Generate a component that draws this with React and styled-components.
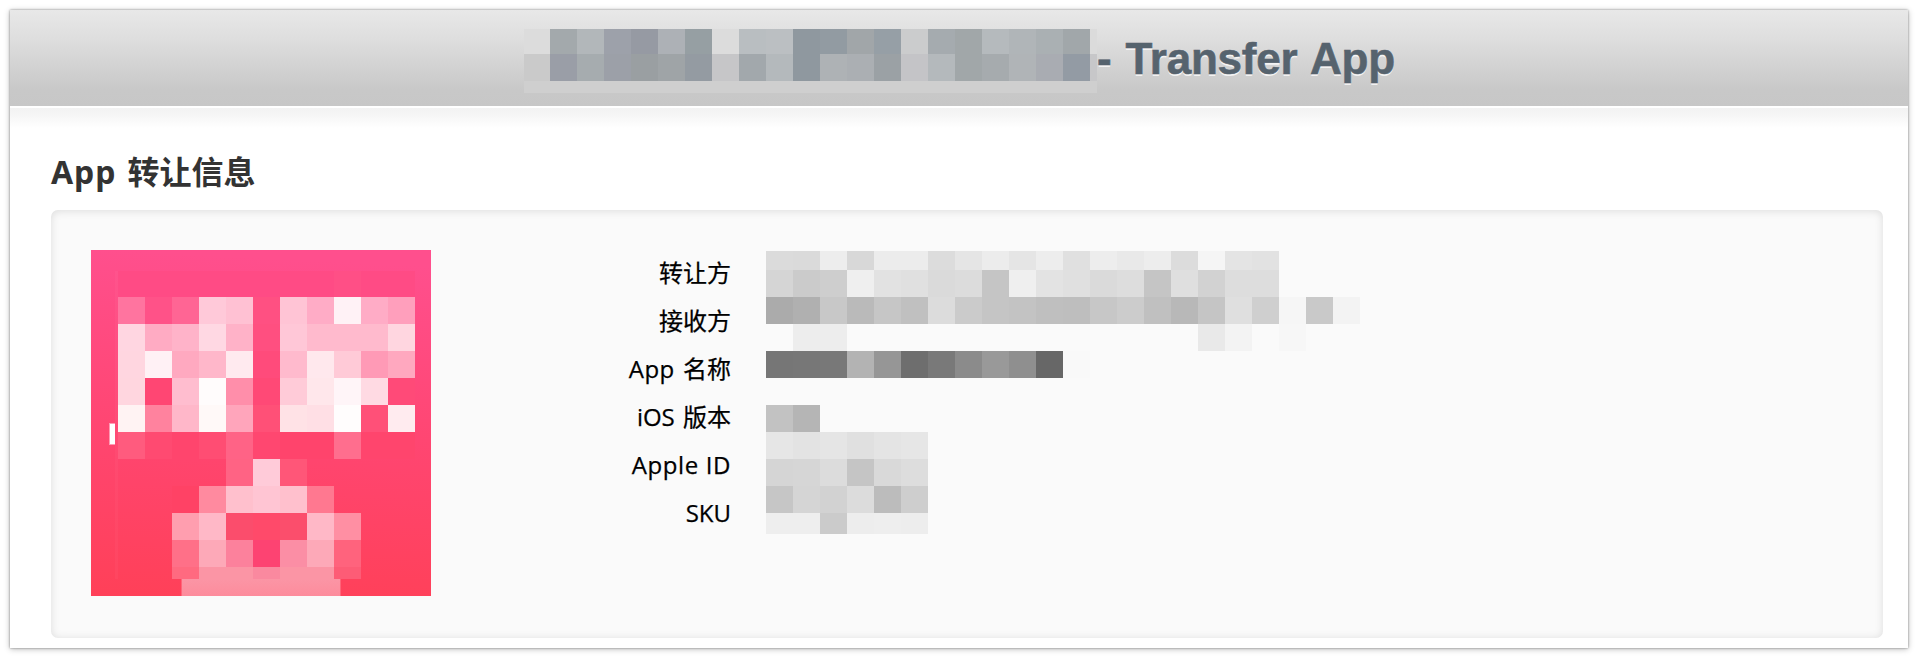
import React from 'react';
import styled, { createGlobalStyle } from 'styled-components';

const GlobalStyle = createGlobalStyle`
  * { box-sizing: border-box; }
  body { margin: 0; background: #fff; }
`;

const Page = styled.div`
  height: 658px;
  padding: 10px;
`;

const Window = styled.main`
  height: 638px;
  background: #fff;
  box-shadow: 0 0 2px rgba(0, 0, 0, 0.4), 0 1px 6px rgba(0, 0, 0, 0.28);
`;

const Header = styled.header`
  display: flex;
  align-items: flex-start;
  height: 96px;
  padding: 19px 0 0 514px;
  background: linear-gradient(#e8e8e8 0%, #dedede 30%, #c8c8c8 84%, #c7c7c7 100%);
`;

const Title = styled.h1`
  margin: 0;
  font: bold 44px/60px 'Liberation Sans', sans-serif;
  letter-spacing: ${(p) => p.$tracking}px;
  word-spacing: 2px;
  white-space: pre;
  color: #56636e;
  -webkit-text-stroke: 0.6px #56636e;
  text-shadow: 0 2px 0 rgba(255, 255, 255, 0.75);
`;

const Content = styled.section`
  height: 542px;
  padding: 42px 25px 0 41px;
  border-top: 2px solid #fff;
  background: linear-gradient(#f3f3f3, #f5f5f5 6px, #fff 20px);
`;

const Heading = styled.h2`
  height: 60px;
  margin: 0;
  font: bold 32px/44px 'Noto Sans', 'Noto Sans CJK SC', sans-serif;
  white-space: nowrap;
  color: #333;
`;

const Latin = styled.span`
  letter-spacing: ${(p) => p.$tracking || 0}px;
  margin-right: ${(p) => p.$gap || 0}px;
`;

const Panel = styled.div`
  display: flex;
  align-items: flex-start;
  height: 428px;
  padding: 40px 40px 0;
  border-radius: 7px;
  background: #fafafa;
  box-shadow: inset 0 1px 8px rgba(0, 0, 0, 0.12);
`;

const Artwork = styled.svg`
  display: block;
  flex: none;
  width: 340px;
  height: 346px;
`;

const Labels = styled.div`
  display: grid;
  grid-auto-rows: 48px;
  width: 300px;
  margin-top: -1px;
  text-align: right;
`;

const Label = styled.div`
  font: 24px/48px 'Open Sans', 'Noto Sans CJK SC', sans-serif;
  white-space: nowrap;
  color: #000;
  -webkit-text-stroke: 0.25px #000;
`;

const Values = styled.div`
  padding: 1px 0 0 35px;
`;

const Mosaic = styled.div`
  display: grid;
  width: max-content;
  grid-template-columns: ${(p) => p.$columns};
  grid-template-rows: ${(p) => p.$rows};
`;

const Tile = styled.div`
  background: ${(p) => p.$color};
`;

const NAME_TILES = [
  'dcdcdc a3a9ac b2b7ba 9da1aa 969aa3 adb1b6 969fa3 dcdcdc b9bec1 bbbfc2 8f989f 929ba2 a1a6a9 969fa6 cbcccd a5abaf a1a7a9 b5babd b0b5b8 aab0b3 a1a7aa dbdbdb',
  'cacaca 9a9ea7 a6acaf 9ca0a8 9a9fa2 9fa4a7 949ba2 c6c6c8 a2a8ac b4b9bc 8f989f aeb2b5 abafb3 9ba1a5 c4c4c7 b4b9bc a1a7a9 a6abae b0b4b7 a9acb2 939ba4 c7c7c9',
  Array(22).fill('cfcfcf').join(' '),
].map((row) => row.split(' ').map((c) => `#${c}`));

const toGrays = (row, count) =>
  Array.from({ length: count }, (_, i) => {
    const v = row.split(' ')[i];
    return v && v !== '--' ? `#${v}${v}${v}` : 'transparent';
  });

const VALUE_TILES = [
  'db da ed d8 ec ec dc e5 ec e5 ed e0 ed e9 ed dc f5 e4 e2',
  'd5 cb ce ef e2 e0 da dc c5 ef e3 e0 da dd c5 df d2 dd dd',
  'ab b0 c8 ba c6 c0 dc cb c5 c3 bf be c7 cc c0 b8 c5 df cf f6 c9 f3',
  '-- ed ed -- -- -- -- -- -- -- -- -- -- -- -- -- e9 f3 -- f7',
  '76 77 78 b3 96 6e 79 8b 99 8f 67 f9',
  '',
  'c2 b5',
  'e6 e3 e5 e0 e4 e6',
  'd5 d6 dc c5 d9 dd',
  'c6 d5 d2 dc bc ce',
  'ee ee cb ed ee ed',
].map((row) => toGrays(row, 22));

const ART_ROWS = [
  [47, 27, 'ff749f ff5288 ff6594 ffc9d9 ffc1d3 ff5082 ffc4d5 ffacc6 fff2f6 ffacc6 ff9fbc'],
  [74, 27, 'ffd6e1 ffabc3 ffb3c9 ffd8e3 ffb2c8 ff4f80 ffc7d7 ffbacd ffbacd ffbacd ffd6e0'],
  [101, 27, 'ffd6e0 fff1f5 ffa9c0 ffb7ca ffeaef ff4b7b ffbacd ffe8ed ffcad7 ff9ab6 ffa8bf'],
  [128, 27, 'ffd6df ff4673 ffbdcf fffcfc ff8eaa ff4976 ffcbd8 ffe7eb fff5f8 ffdae3 ff4a78'],
  [155, 27, 'fff3f3 ff829e ffb7c9 fff9f8 ffa5bb ff5077 ffe2e6 ffdfe5 fffdfd ff5078 ffebef'],
  [182, 27, 'ff5b7e ff4a71 ff456d ff4d73 ff6386 ff4770 ff446c ff446c ff6e8e ff456d ff456d'],
  [209, 27, '-- -- -- -- ff6384 ffcbd9 ff5678 -- -- -- --'],
  [236, 27, '-- -- ff4265 ff8a9f ffc0cd ffc5d3 ffc0cd ff7890 -- -- --'],
  [263, 27, '-- -- ff9eaf ffb8c7 fb4d6c ff4a6a fb4e6c ffb8c7 ff8fa3 -- --'],
  [290, 27, '-- -- ff7088 fda9b8 fc819c fd4372 fb8ea5 fda9b8 ff637d -- --'],
  [317, 12, '-- -- ff6a80 fb95a5 fb95a5 fa899f fb95a5 fb95a5 fd5c76 -- --'],
];

function AppArtwork() {
  return (
    <Artwork viewBox="0 0 340 346" shapeRendering="crispEdges">
      <defs>
        <linearGradient id="base" x1="0.05" y1="0" x2="0" y2="1">
          <stop offset="0" stopColor="#ff4f8d" />
          <stop offset="0.5" stopColor="#ff4672" />
          <stop offset="1" stopColor="#ff4058" />
        </linearGradient>
        <linearGradient id="lip" x1="0" y1="0" x2="0" y2="1">
          <stop offset="0" stopColor="#fb95a5" />
          <stop offset="1" stopColor="#fd8c9c" />
        </linearGradient>
      </defs>
      <rect width="340" height="346" fill="url(#base)" />
      <rect x="27" y="21" width="297" height="26" fill="#ff4b85" />
      <rect x="243" y="21" width="27" height="26" fill="#ff4f86" />
      <rect x="24" y="21" width="3" height="308" fill="#fff" opacity="0.03" />
      {ART_ROWS.map(([y, height, colors]) =>
        colors.split(' ').map((c, i) =>
          c === '--' ? null : (
            <rect key={`${y}-${i}`} x={27 + i * 27} y={y} width="27" height={height} fill={`#${c}`} />
          ),
        ),
      )}
      <rect x="18" y="173" width="6" height="22" fill="#ff9ab3" />
      <rect x="19" y="174" width="5" height="20" fill="#fff" />
      <rect x="90" y="329" width="160" height="17" fill="#ff6479" />
      <rect x="91" y="329" width="158" height="17" fill="url(#lip)" />
    </Artwork>
  );
}

function Tiles({ rows, ...sizes }) {
  return (
    <Mosaic {...sizes}>
      {rows.flatMap((row, r) => row.map((color, c) => <Tile key={`${r}-${c}`} $color={color} />))}
    </Mosaic>
  );
}

export default function App() {
  return (
    <Page>
      <GlobalStyle />
      <Window>
        <Header>
          <Tiles rows={NAME_TILES} $columns="26px repeat(20, 27px) 7px" $rows="25px 27px 12px" />
          <Title $tracking={-0.2}>- Transfer App</Title>
        </Header>
        <Content>
          <Heading>
            <Latin $tracking={0.9} $gap={2}>App </Latin>转让信息
          </Heading>
          <Panel>
            <AppArtwork />
            <Labels>
              <Label>转让方</Label>
              <Label>接收方</Label>
              <Label><Latin $tracking={0.5} $gap={1.5}>App </Latin>名称</Label>
              <Label><Latin $gap={2}>iOS </Latin>版本</Label>
              <Label><Latin $tracking={0.6}>Apple ID</Latin></Label>
              <Label><Latin>SKU</Latin></Label>
            </Labels>
            <Values>
              <Tiles rows={VALUE_TILES} $columns="repeat(22, 27px)" $rows="19px repeat(9, 27px) 21px" />
            </Values>
          </Panel>
        </Content>
      </Window>
    </Page>
  );
}
